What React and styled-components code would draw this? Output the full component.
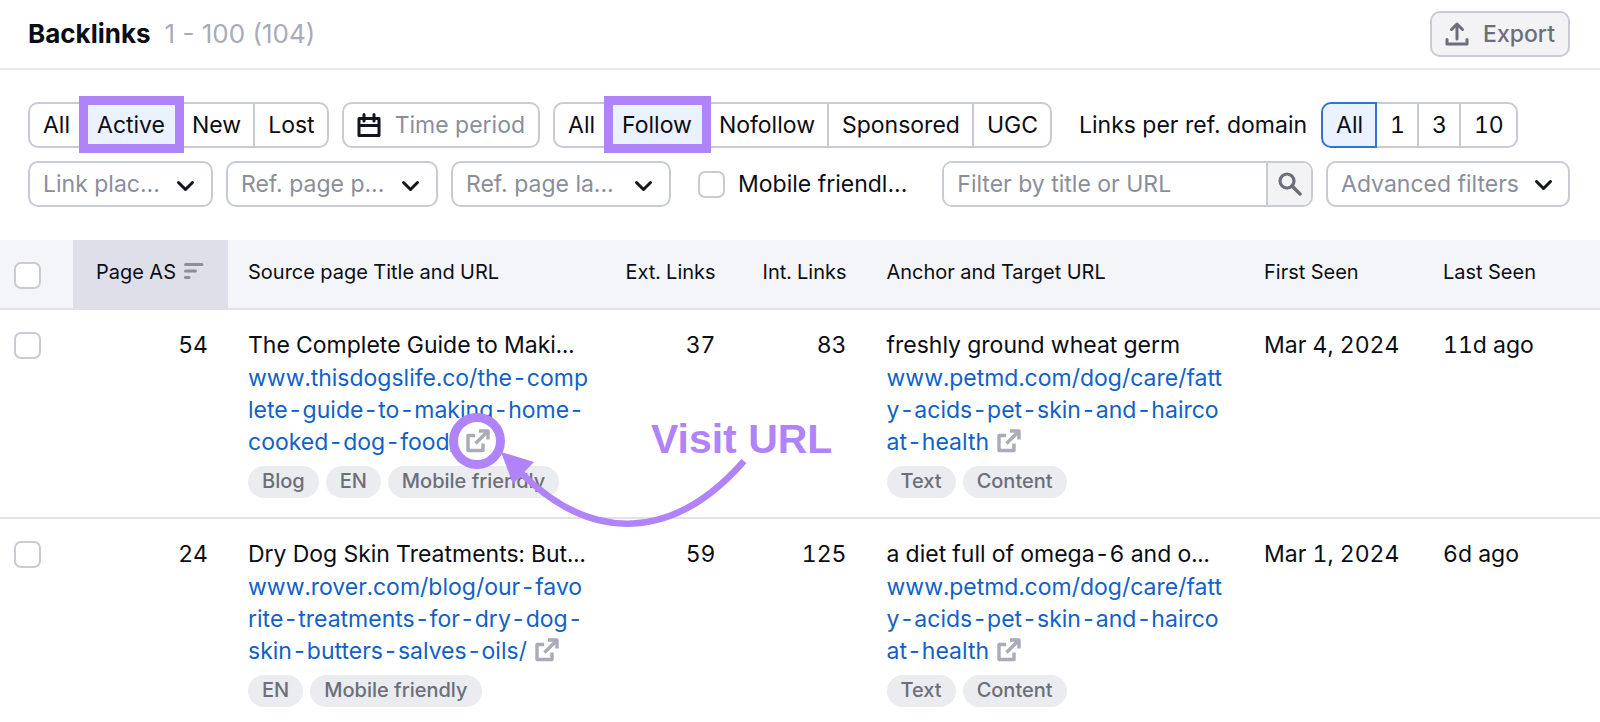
import { useState } from 'react';
import styled, { createGlobalStyle } from 'styled-components';

const GlobalStyle = createGlobalStyle`
  *, *::before, *::after {
    box-sizing: border-box;
  }
  body {
    margin: 0;
    background: #ffffff;
    color: #0b0d14;
    font-family: Inter, "Liberation Sans", sans-serif;
    font-size: 23px;
    line-height: 32px;
  }
  button, input, select {
    font: inherit;
    color: inherit;
  }
`;

const Page = styled.main`
  min-width: 1560px;
  overflow: hidden;
`;

const Header = styled.header`
  display: flex;
  align-items: center;
  justify-content: space-between;
  height: 70px;
  padding: 0 30px 0 28px;
  border-bottom: 2px solid #e6e7ed;
`;

const Title = styled.h1`
  display: flex;
  gap: 14px;
  margin: 0;
  font-size: 26px;
  font-weight: 700;
  span {
    color: #a9abb6;
    font-weight: 400;
  }
`;

const ExportButton = styled.button`
  display: flex;
  align-items: center;
  gap: 14px;
  height: 46px;
  padding: 0 13px;
  border: 2px solid #c9cbd4;
  border-radius: 10px;
  background: #f3f3f6;
  color: #6c6e79;
  font-weight: 500;
`;

const Filters = styled.section`
  display: flex;
  flex-direction: column;
  gap: 13px;
  padding: 32px 30px 33px 28px;
`;

const FilterRow = styled.div`
  display: flex;
  align-items: center;
  gap: 13px;
`;

const Pills = styled.div`
  display: flex;
  height: 46px;
  font-variant-numeric: tabular-nums;
`;

const Pill = styled.button`
  position: relative;
  padding: 0 12px 0 13px;
  border: 2px solid ${({ $outlined }) => ($outlined ? '#2f74d0' : '#c9cbd4')};
  background: ${({ $active }) => ($active ? '#eaf2ff' : '#ffffff')};
  font-variant-numeric: inherit;
  z-index: ${({ $active }) => ($active ? 1 : 0)};
  & + & {
    margin-left: -2px;
  }
  &:first-child {
    border-radius: 10px 0 0 10px;
  }
  &:last-child {
    border-radius: 0 10px 10px 0;
  }
`;

const Frame = styled.span`
  position: absolute;
  inset: -8px -7px -7px -5px;
  border: 9px solid #b183f8;
  pointer-events: none;
`;

const PeriodButton = styled.button`
  display: flex;
  align-items: center;
  gap: 14px;
  height: 46px;
  padding: 0 13px;
  border: 2px solid #c9cbd4;
  border-radius: 10px;
  background: #ffffff;
  color: #8a8e9b;
  svg {
    color: #12151e;
  }
`;

const DomainLinks = styled.div`
  display: flex;
  align-items: center;
  gap: 14px;
  margin-left: 14px;
`;

const SelectBox = styled.div`
  position: relative;
  width: ${({ $width }) => $width}px;
  height: 46px;
  svg {
    position: absolute;
    top: 12px;
    right: 16px;
    pointer-events: none;
  }
`;

const Select = styled.select`
  width: 100%;
  height: 100%;
  padding: 0 48px 0 13px;
  border: 2px solid #c9cbd4;
  border-radius: 10px;
  background: #ffffff;
  color: #8a8e9b;
  appearance: none;
`;

const Check = styled.input`
  display: block;
  flex: none;
  width: 27px;
  height: 27px;
  margin: 0;
  border: 2px solid #c9cbd4;
  border-radius: 7px;
  background: #ffffff;
  appearance: none;
  &:checked {
    border-color: #2f74d0;
    background: #2f74d0;
  }
`;

const CheckLabel = styled.label`
  display: flex;
  align-items: center;
  gap: 13px;
  margin: 0 22px 0 14px;
`;

const Search = styled.form`
  display: flex;
  flex: 1;
  height: 46px;
  min-width: 0;
  border: 2px solid #c9cbd4;
  border-radius: 10px;
  overflow: hidden;
`;

const SearchInput = styled.input`
  flex: 1;
  min-width: 0;
  padding: 0 13px;
  border: none;
  outline: none;
  &::placeholder {
    color: #8a8e9b;
    opacity: 1;
  }
`;

const SearchButton = styled.button`
  display: flex;
  align-items: center;
  justify-content: center;
  width: 45px;
  padding: 0;
  border: none;
  border-left: 2px solid #c9cbd4;
  background: #f3f3f6;
  color: #6c6e79;
`;

const AdvancedButton = styled(PeriodButton)`
  gap: 12px;
`;

const Table = styled.table`
  width: 100%;
  table-layout: fixed;
  border-collapse: separate;
  border-spacing: 0;
  font-variant-numeric: tabular-nums;
`;

const Col = styled.col`
  width: ${({ $width }) => ($width ? `${$width}px` : 'auto')};
`;

const Th = styled.th`
  height: 70px;
  padding: 20px 20px 0;
  border-bottom: 2px solid #e0e1e9;
  background: ${({ $sorted }) => ($sorted ? '#dfdfe9' : '#f4f5f9')};
  font-size: 20px;
  font-weight: 400;
  line-height: 24px;
  text-align: ${({ $right }) => ($right ? 'right' : 'left')};
  vertical-align: top;
  white-space: nowrap;
`;

const CheckTh = styled(Th)`
  padding: 22px 14px 0;
`;

const SortLabel = styled.span`
  display: flex;
  align-items: center;
  justify-content: flex-end;
  gap: 8px;
`;

const Td = styled.td`
  padding: 19px 20px;
  border-bottom: 2px solid #e0e1e9;
  text-align: ${({ $right }) => ($right ? 'right' : 'left')};
  vertical-align: top;
`;

const CheckTd = styled(Td)`
  padding: 22px 14px;
`;

const LinkTd = styled(Td)`
  padding-right: 17px;
`;

const CellTitle = styled.div`
  white-space: nowrap;
`;

const Url = styled.div`
  margin-top: 1px;
  word-break: break-all;
  a {
    color: #1162c6;
    text-decoration: none;
  }
`;

const Visit = styled.span`
  position: relative;
  display: inline-block;
  width: 24px;
  height: 24px;
  margin-left: 8px;
  vertical-align: -3px;
  svg {
    display: block;
  }
  && a {
    display: block;
    color: #a9abb6;
  }
`;

const Callout = styled.span`
  position: absolute;
  top: -18px;
  left: -18px;
  z-index: 2;
  width: 400px;
  height: 120px;
  pointer-events: none;
`;

const CalloutText = styled.span`
  position: absolute;
  top: 4px;
  left: 203px;
  color: #b183f8;
  font-family: "Liberation Sans", Arial, sans-serif;
  font-size: 41px;
  font-weight: 700;
  line-height: 48px;
  white-space: nowrap;
`;

const Tags = styled.div`
  display: flex;
  gap: 7px;
  margin-top: 8px;
`;

const Tag = styled.span`
  height: 32px;
  padding: 0 14px;
  border-radius: 16px;
  background: #ebecf0;
  color: #6c6e79;
  font-size: 20px;
  font-weight: 500;
  line-height: 31px;
`;

const ExportIcon = () => (
  <svg width="24" height="24" viewBox="0 0 24 24" fill="none" stroke="currentColor" strokeWidth="3" strokeLinecap="round" strokeLinejoin="round">
    <path d="M2 17.5V22H22V17.5" />
    <path d="M12 17V2.5M6.5 7.5L12 2L17.5 7.5" />
  </svg>
);

const CalendarIcon = () => (
  <svg width="24" height="24" viewBox="0 0 24 24" fill="none" stroke="currentColor" strokeWidth="3">
    <path d="M2 5.5H22V22.5H2Z" strokeLinejoin="round" />
    <path d="M2 12.5H22" />
    <path d="M7 1.5V8M17 1.5V8" strokeLinecap="round" />
  </svg>
);

const Chevron = () => (
  <svg width="24" height="24" viewBox="0 0 24 24" fill="none" stroke="#12151e" strokeWidth="3" strokeLinecap="round" strokeLinejoin="round">
    <path d="M5.5 9.5L12.5 16.5L19.5 9.5" />
  </svg>
);

const SearchIcon = () => (
  <svg width="24" height="24" viewBox="0 0 24 24" fill="none" stroke="currentColor" strokeLinecap="round">
    <circle cx="9" cy="9" r="7" strokeWidth="3.2" />
    <path d="M14 14L22 22" strokeWidth="3.4" />
  </svg>
);

const SortIcon = () => (
  <svg width="24" height="24" viewBox="0 0 24 24" fill="none" stroke="#8b8d98" strokeWidth="3" strokeLinecap="round">
    <path d="M1.5 4.5H18M1.5 11H11.5M1.5 17.5H5" />
  </svg>
);

const ExternalIcon = () => (
  <svg width="24" height="24" viewBox="0 0 24 24" fill="none" stroke="currentColor" strokeWidth="3.4">
    <path d="M9 6.5H2V21.5H17V14.5" strokeLinejoin="round" />
    <path d="M13 2H22V10.5" strokeLinejoin="round" />
    <path d="M21.5 2.5L9.5 14.5" />
  </svg>
);

const VisitCallout = () => (
  <Callout>
    <svg width="400" height="120" viewBox="0 0 400 120" fill="none">
      <circle cx="29" cy="30" r="23.5" stroke="#b183f8" strokeWidth="9" />
      <path d="M296 50C226 130 144 133 72 61" stroke="#b183f8" strokeWidth="6.5" />
      <path d="M53 41L86 51L65 73Z" fill="#b183f8" />
    </svg>
    <CalloutText>Visit URL</CalloutText>
  </Callout>
);

const rows = [
  {
    score: 54,
    title: 'The Complete Guide to Maki...',
    url: 'www.thisdogslife.co/the-complete-guide-to-making-home-cooked-dog-food/',
    tags: ['Blog', 'EN', 'Mobile friendly'],
    ext: 37,
    int: 83,
    anchor: 'freshly ground wheat germ',
    firstSeen: 'Mar 4, 2024',
    lastSeen: '11d ago',
    callout: true,
  },
  {
    score: 24,
    title: 'Dry Dog Skin Treatments: But...',
    url: 'www.rover.com/blog/our-favorite-treatments-for-dry-dog-skin-butters-salves-oils/',
    tags: ['EN', 'Mobile friendly'],
    ext: 59,
    int: 125,
    anchor: 'a diet full of omega-6 and o...',
    firstSeen: 'Mar 1, 2024',
    lastSeen: '6d ago',
  },
];

const target = 'www.petmd.com/dog/care/fatty-acids-pet-skin-and-haircoat-health';

const PillGroup = ({ label, items, value, onChange, framed }) => (
  <Pills role="group" aria-label={label}>
    {items.map((item) => (
      <Pill
        key={item}
        type="button"
        aria-pressed={item === value}
        $active={item === value}
        $outlined={item === value && !framed}
        onClick={() => onChange(item)}
      >
        {item}
        {framed && item === value && <Frame />}
      </Pill>
    ))}
  </Pills>
);

const FilterSelect = ({ label, text, width }) => (
  <SelectBox $width={width}>
    <Select aria-label={label}>
      <option>{text}</option>
    </Select>
    <Chevron />
  </SelectBox>
);

const LinkCell = ({ title, url, tags, callout }) => (
  <LinkTd>
    <CellTitle>{title}</CellTitle>
    <Url>
      <a href={`https://${url}`}>{url}</a>
      <Visit>
        <a href={`https://${url}`} aria-label="Visit URL">
          <ExternalIcon />
        </a>
        {callout && <VisitCallout />}
      </Visit>
    </Url>
    <Tags>
      {tags.map((tag) => (
        <Tag key={tag}>{tag}</Tag>
      ))}
    </Tags>
  </LinkTd>
);

const App = () => {
  const [status, setStatus] = useState('Active');
  const [rel, setRel] = useState('Follow');
  const [perDomain, setPerDomain] = useState('All');

  return (
    <Page>
      <GlobalStyle />
      <Header>
        <Title>
          Backlinks <span>1 - 100 (104)</span>
        </Title>
        <ExportButton type="button">
          <ExportIcon />
          Export
        </ExportButton>
      </Header>

      <Filters>
        <FilterRow>
          <PillGroup
            label="Status"
            items={['All', 'Active', 'New', 'Lost']}
            value={status}
            onChange={setStatus}
            framed
          />
          <PeriodButton type="button">
            <CalendarIcon />
            Time period
          </PeriodButton>
          <PillGroup
            label="Link attribute"
            items={['All', 'Follow', 'Nofollow', 'Sponsored', 'UGC']}
            value={rel}
            onChange={setRel}
            framed
          />
          <DomainLinks>
            <span>Links per ref. domain</span>
            <PillGroup
              label="Links per ref. domain"
              items={['All', '1', '3', '10']}
              value={perDomain}
              onChange={setPerDomain}
            />
          </DomainLinks>
        </FilterRow>
        <FilterRow>
          <FilterSelect label="Link placement" text="Link plac..." width={185} />
          <FilterSelect label="Ref. page platform" text="Ref. page p..." width={212} />
          <FilterSelect label="Ref. page language" text="Ref. page la..." width={220} />
          <CheckLabel>
            <Check type="checkbox" />
            Mobile friendl...
          </CheckLabel>
          <Search onSubmit={(e) => e.preventDefault()}>
            <SearchInput type="text" aria-label="Filter by title or URL" placeholder="Filter by title or URL" />
            <SearchButton type="submit" aria-label="Search">
              <SearchIcon />
            </SearchButton>
          </Search>
          <AdvancedButton type="button">
            Advanced filters
            <Chevron />
          </AdvancedButton>
        </FilterRow>
      </Filters>

      <Table>
        <colgroup>
          <Col $width={73} />
          <Col $width={155} />
          <Col />
          <Col $width={130} />
          <Col $width={131} />
          <Col />
          <Col $width={179} />
          <Col $width={177} />
        </colgroup>
        <thead>
          <tr>
            <CheckTh>
              <Check type="checkbox" aria-label="Select all" />
            </CheckTh>
            <Th $sorted $right aria-sort="descending">
              <SortLabel>
                Page AS
                <SortIcon />
              </SortLabel>
            </Th>
            <Th>Source page Title and URL</Th>
            <Th $right>Ext. Links</Th>
            <Th $right>Int. Links</Th>
            <Th>Anchor and Target URL</Th>
            <Th>First Seen</Th>
            <Th>Last Seen</Th>
          </tr>
        </thead>
        <tbody>
          {rows.map((row) => (
            <tr key={row.url}>
              <CheckTd>
                <Check type="checkbox" aria-label={`Select ${row.url}`} />
              </CheckTd>
              <Td $right>{row.score}</Td>
              <LinkCell title={row.title} url={row.url} tags={row.tags} callout={row.callout} />
              <Td $right>{row.ext}</Td>
              <Td $right>{row.int}</Td>
              <LinkCell title={row.anchor} url={target} tags={['Text', 'Content']} />
              <Td>{row.firstSeen}</Td>
              <Td>{row.lastSeen}</Td>
            </tr>
          ))}
        </tbody>
      </Table>
    </Page>
  );
};

export default App;
